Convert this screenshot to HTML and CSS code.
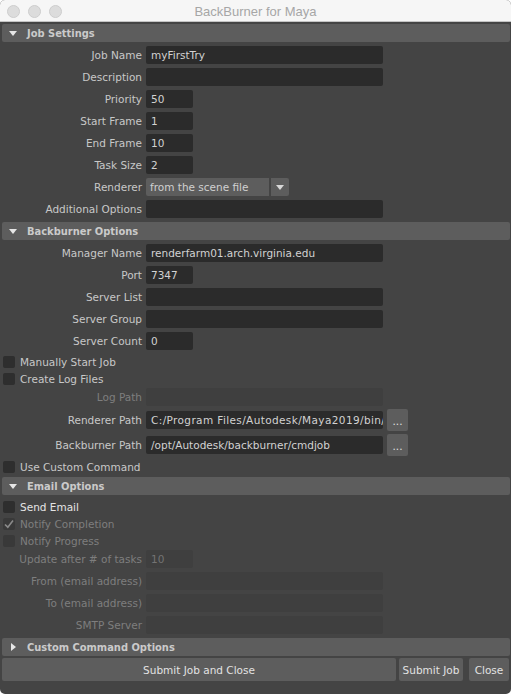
FILE: index.html
```html
<!DOCTYPE html>
<html>
<head>
<meta charset="utf-8">
<title>BackBurner for Maya</title>
<link rel="stylesheet" href="styles.css">
</head>
<body>
<div class="window">
  <div class="titlebar">
    <div class="lights"><span class="light"></span><span class="light"></span><span class="light"></span></div>
    <div class="title">BackBurner for Maya</div>
  </div>
  <div class="content">
    <div class="header"><span class="tri-down"></span><span class="htext">Job Settings</span></div>
    <div class="row first"><span class="label">Job Name</span><span class="field long">myFirstTry</span></div>
    <div class="row"><span class="label">Description</span><span class="field long"></span></div>
    <div class="row"><span class="label">Priority</span><span class="field short">50</span></div>
    <div class="row"><span class="label">Start Frame</span><span class="field short">1</span></div>
    <div class="row"><span class="label">End Frame</span><span class="field short">10</span></div>
    <div class="row"><span class="label">Task Size</span><span class="field short">2</span></div>
    <div class="row"><span class="label">Renderer</span><span class="combo">from the scene file</span><span class="combo-arrow"><span class="arrow-down"></span></span></div>
    <div class="row"><span class="label">Additional Options</span><span class="field long"></span></div>

    <div class="header sec"><span class="tri-down"></span><span class="htext">Backburner Options</span></div>
    <div class="row first"><span class="label">Manager Name</span><span class="field long">renderfarm01.arch.virginia.edu</span></div>
    <div class="row"><span class="label">Port</span><span class="field short">7347</span></div>
    <div class="row"><span class="label">Server List</span><span class="field long"></span></div>
    <div class="row"><span class="label">Server Group</span><span class="field long"></span></div>
    <div class="row"><span class="label">Server Count</span><span class="field short">0</span></div>
    <div class="check c-first"><span class="box"></span><span class="clabel">Manually Start Job</span></div>
    <div class="check"><span class="box"></span><span class="clabel">Create Log Files</span></div>
    <div class="row logpath"><span class="label dim">Log Path</span><span class="field long off"></span></div>
    <div class="row brow"><span class="label">Renderer Path</span><span class="field long path">C:/Program Files/Autodesk/Maya2019/bin/</span><span class="dots">...</span></div>
    <div class="row brow"><span class="label">Backburner Path</span><span class="field long">/opt/Autodesk/backburner/cmdjob</span><span class="dots">...</span></div>
    <div class="check c-custom"><span class="box"></span><span class="clabel">Use Custom Command</span></div>

    <div class="header sec2"><span class="tri-down"></span><span class="htext">Email Options</span></div>
    <div class="check c-email"><span class="box"></span><span class="clabel bright">Send Email</span></div>
    <div class="check"><span class="box off"><svg class="tick" width="12" height="12" viewBox="0 0 12 12"><path d="M2 6.5 L4.8 9.2 L10 2.5" fill="none" stroke="#8a8a8a" stroke-width="1.6"/></svg></span><span class="clabel dim">Notify Completion</span></div>
    <div class="check"><span class="box off"></span><span class="clabel dim">Notify Progress</span></div>
    <div class="row upd"><span class="label dim">Update after # of tasks</span><span class="field short off">10</span></div>
    <div class="row"><span class="label dim">From (email address)</span><span class="field long off"></span></div>
    <div class="row"><span class="label dim">To (email address)</span><span class="field long off"></span></div>
    <div class="row"><span class="label dim">SMTP Server</span><span class="field long off"></span></div>

    <div class="header sec3"><span class="tri-right"></span><span class="htext">Custom Command Options</span></div>
    <div class="buttons">
      <span class="btn wide">Submit Job and Close</span>
      <span class="btn submit">Submit Job</span>
      <span class="btn close">Close</span>
    </div>
  </div>
</div>
</body>
</html>
```
FILE: styles.css
```css
html, body {
  margin: 0;
  padding: 0;
  background: #ffffff;
}
.window {
  width: 511px;
  height: 694px;
  background: #444444;
  border-radius: 5px;
  overflow: hidden;
  font-family: "DejaVu Sans", sans-serif;
  font-size: 10.5px;
  color: #c8c8c8;
  display: flex;
  flex-direction: column;
}
.titlebar {
  height: 21px;
  border-bottom: 1px solid #c4c4c4;
  background: #f6f6f6;
  position: relative;
  display: flex;
  align-items: center;
  justify-content: center;
}
.lights {
  position: absolute;
  left: 7px;
  top: 5px;
  display: flex;
  gap: 8px;
}
.light {
  width: 11px;
  height: 11px;
  border-radius: 50%;
  background: #dcdcdc;
  border: 0.5px solid #cdcdcd;
}
.title {
  font-family: "Liberation Sans", sans-serif;
  font-size: 13px;
  color: #a6a6a6;
  padding-top: 1px;
}
.content {
  display: flex;
  flex-direction: column;
}
.header {
  margin: 2px 1px 0 2px;
  height: 18px;
  background: #5d5d5d;
  border-radius: 2px;
  display: flex;
  align-items: center;
}
.htext {
  font-family: "DejaVu Sans Condensed", "DejaVu Sans", sans-serif;
  font-stretch: condensed;
  font-weight: bold;
  font-size: 11px;
  color: #cacaca;
  margin-left: 10px;
}
.tri-down {
  width: 0;
  height: 0;
  margin-left: 7px;
  border-left: 4px solid transparent;
  border-right: 4px solid transparent;
  border-top: 5px solid #e6e6e6;
}
.tri-right {
  width: 0;
  height: 0;
  margin-left: 9px;
  margin-right: 1px;
  border-top: 4.5px solid transparent;
  border-bottom: 4.5px solid transparent;
  border-left: 5px solid #e6e6e6;
}
.sec { margin-top: 4px; }
.sec2 { margin-top: 2px; }
.sec3 { margin-top: 4px; }
.row {
  display: flex;
  align-items: center;
  height: 18px;
  margin-top: 4px;
}
.row.first { margin-top: 4px; }
.label {
  width: 142px;
  text-align: right;
  white-space: nowrap;
  margin-right: 4px;
  color: #c8c8c8;
}
.label.dim, .clabel.dim { color: #7e7e7e; }
.field {
  height: 18px;
  line-height: 18px;
  background: #2b2b2b;
  border-radius: 2px;
  color: #d2d2d2;
  padding-left: 5px;
  box-sizing: border-box;
  white-space: nowrap;
  overflow: hidden;
}
.field.long { width: 237px; }
.field.short { width: 47px; }
.field.off { background: #3f3f3f; color: #737373; }
.field.path { letter-spacing: 0.38px; padding-left: 5px; padding-right: 0; }
.combo {
  width: 123px;
  height: 18px;
  line-height: 18px;
  background: #5d5d5d;
  border-radius: 2px 0 0 2px;
  padding-left: 4px;
  box-sizing: border-box;
  color: #d0d0d0;
  white-space: nowrap;
}
.combo-arrow {
  width: 18px;
  height: 18px;
  margin-left: 2px;
  background: #5d5d5d;
  border-radius: 0 2px 2px 0;
  display: flex;
  align-items: center;
  justify-content: center;
}
.arrow-down {
  width: 0;
  height: 0;
  border-left: 4px solid transparent;
  border-right: 4px solid transparent;
  border-top: 5px solid #d8d8d8;
}
.logpath { margin-top: 1px; }
.brow { height: 22px; margin-top: 3px; }
.dots {
  width: 21px;
  height: 22px;
  margin-left: 4px;
  background: #5d5d5d;
  border-radius: 2px;
  color: #e0e0e0;
  display: flex;
  align-items: center;
  justify-content: center;
  line-height: 1;
  padding-top: 2px;
  box-sizing: border-box;
}
.check {
  display: flex;
  align-items: center;
  height: 17px;
}
.c-first { margin-top: 3px; }
.c-custom { margin-top: 2px; }
.c-email { margin-top: 3px; }
.box {
  width: 12px;
  height: 12px;
  margin-left: 3px;
  margin-right: 5px;
  background: #2e2e2e;
  border-radius: 2px;
  position: relative;
}
.box.off { background: #393939; }
.tick {
  position: absolute;
  left: 0;
  top: 0;
}
.clabel { color: #c8c8c8; }
.clabel.bright { color: #e4e4e4; }
.upd { margin-top: 1px; }
.buttons {
  display: flex;
  margin-top: 2px;
  height: 23px;
}
.btn {
  background: #5d5d5d;
  border-radius: 2px;
  color: #e2e2e2;
  display: flex;
  align-items: center;
  justify-content: center;
  height: 23px;
}
.btn.wide { width: 394px; margin-left: 2px; }
.btn.submit { width: 64px; margin-left: 3px; }
.btn.close { width: 40px; margin-left: 6px; }
```
